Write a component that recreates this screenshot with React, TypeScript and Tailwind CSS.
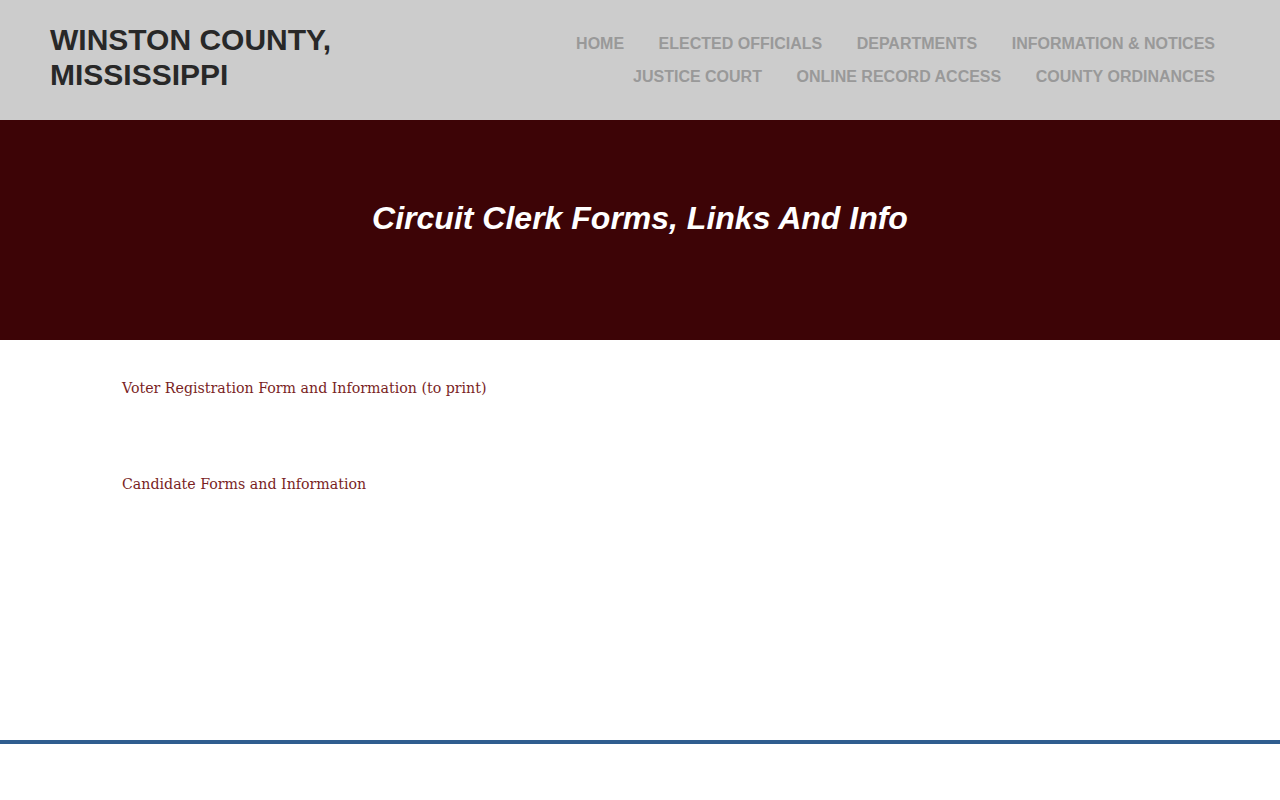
import React from "react";

const navRow1 = ["HOME", "ELECTED OFFICIALS", "DEPARTMENTS", "INFORMATION & NOTICES"];
const navRow2 = ["JUSTICE COURT", "ONLINE RECORD ACCESS", "COUNTY ORDINANCES"];

export default function App() {
  return (
    <div className="min-h-[800px] bg-white" style={{ fontFamily: '"Liberation Sans", Arial, sans-serif' }}>
      <header className="h-[120px] bg-[#cccccc] flex justify-between pl-[50px] pr-[65px]">
        <div className="pt-[22px] text-[30px] leading-[35px] font-bold text-[#282828]">
          WINSTON COUNTY,<br />MISSISSIPPI
        </div>
        <nav className="pt-[34px] flex flex-col items-end gap-[14px] text-[16px] leading-[19px] font-bold text-[#999999]">
          <div className="flex gap-[34.5px]">
            {navRow1.map((n) => (
              <a key={n}>{n}</a>
            ))}
          </div>
          <div className="flex gap-[34.5px]">
            {navRow2.map((n) => (
              <a key={n}>{n}</a>
            ))}
          </div>
        </nav>
      </header>
      <section className="h-[220px] bg-[#3d0406] flex justify-center pt-[80px]">
        <h1 className="text-[32px] leading-[36px] italic font-bold text-white">Circuit Clerk Forms, Links And Info</h1>
      </section>
      <main className="h-[400px] pl-[122px] pt-[37px] text-[14.2px] text-[#7a1f1f]" style={{ fontFamily: '"DejaVu Serif", Georgia, serif' }}>
        <p className="leading-[22px]">Voter Registration Form and Information (to print)</p>
        <p className="leading-[22px] mt-[74px]">Candidate Forms and Information</p>
      </main>
      <div className="h-[4px] bg-[#2f5d8f]" />
    </div>
  );
}
